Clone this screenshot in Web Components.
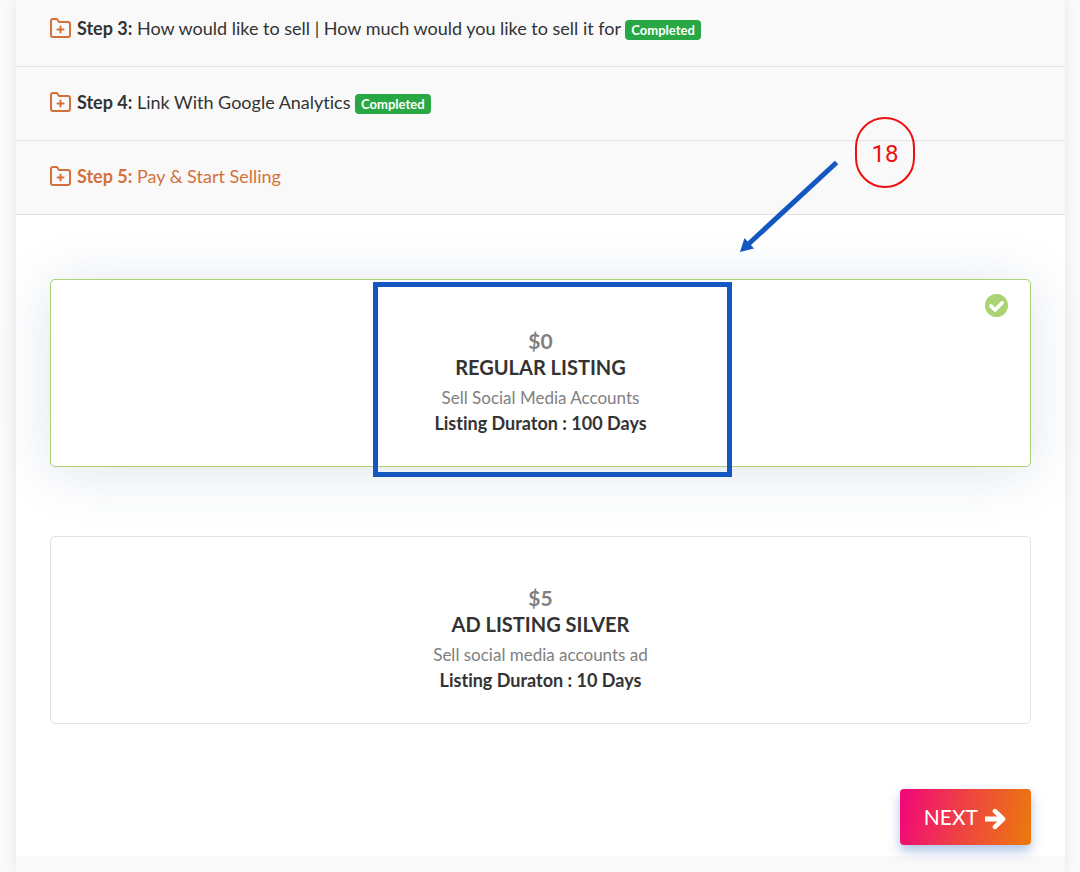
<!DOCTYPE html>
<html lang="en">
<head>
<meta charset="utf-8">
<title>Sell your account</title>
<meta name="viewport" content="width=device-width, initial-scale=1">
<style>
  body {
    margin: 0;
    min-height: 100vh;
    background: #fbfbfb;
    color: #333;
    font-family: Lato, "Open Sans", sans-serif;
    font-variant-ligatures: none;
    overflow-x: hidden;
  }
</style>
</head>
<body>
<listing-page>
  <step-header step="3" completed>How would like to sell | How much would you like to sell it for</step-header>
  <step-header step="4" completed>Link With Google Analytics</step-header>
  <step-header step="5" active>Pay &amp; Start Selling</step-header>
  <plan-card slot="plan" price="$0" duration="100 Days" checked>
    REGULAR LISTING
    <span slot="description">Sell Social Media Accounts</span>
  </plan-card>
  <plan-card slot="plan" price="$5" duration="10 Days">
    AD LISTING SILVER
    <span slot="description">Sell social media accounts ad</span>
  </plan-card>
  <next-button slot="action">NEXT</next-button>
  <guide-marks slot="guide">18</guide-marks>
</listing-page>

<script>
class ListingPage extends HTMLElement {
  css = `
  <style>
  :host {
    display: block;
    position: relative;
    padding: 0 15px 0 16px;
  }
  main {
    display: flow-root;
    min-height: 100vh;
    background: #f9f9f9;
    box-shadow: 0 0 14px rgba(0, 0, 0, 0.09);
  }
  .steps {
    margin-top: -7px;
  }
  .content {
    display: flex;
    flex-direction: column;
    background: #fff;
    padding: 64px 34px 11px;
  }
  .plans {
    display: grid;
    gap: 69px;
    margin-bottom: 65px;
  }
  .actions {
    display: flex;
    justify-content: flex-end;
  }
  </style>
  `.trim();

  constructor() {
    super();
    this.attachShadow({ mode: 'open' });
  }

  connectedCallback() {
    this.shadowRoot.innerHTML = `${this.css}
    <main>
      <div class="steps"><slot></slot></div>
      <section class="content">
        <div class="plans" role="radiogroup" aria-label="Listing plan"><slot name="plan"></slot></div>
        <div class="actions"><slot name="action"></slot></div>
      </section>
    </main>
    <slot name="guide"></slot>`;

    this.addEventListener('plan-selected', (e) => {
      this.querySelectorAll('plan-card').forEach((card) => {
        card.toggleAttribute('checked', card === e.target);
      });
    });
  }
}

class StepHeader extends HTMLElement {
  css = `
  <style>
  :host {
    display: block;
    border-bottom: 1px solid #e2e2e2;
  }
  button {
    display: flex;
    align-items: center;
    gap: 6px;
    width: 100%;
    padding: 23px 34px 25px;
    border: none;
    background: none;
    color: #333;
    font: inherit;
    font-variant-ligatures: none;
    font-size: 18px;
    line-height: 25px;
    text-align: left;
    cursor: pointer;
  }
  :host([active]) button {
    color: #d4713b;
  }
  svg {
    width: 21px;
    height: 21px;
    flex: none;
  }
  .badge {
    display: inline-block;
    padding: 3px 6px;
    border-radius: 4px;
    background: #28a745;
    color: #fff;
    font-size: 13px;
    font-weight: 700;
    line-height: 14px;
    vertical-align: middle;
  }
  </style>
  `.trim();

  constructor() {
    super();
    this.attachShadow({ mode: 'open' });
  }

  connectedCallback() {
    const badge = this.hasAttribute('completed') ? ' <span class="badge">Completed</span>' : '';
    this.shadowRoot.innerHTML = `${this.css}
    <button type="button">
      <svg viewBox="0 0 21 21" fill="none" stroke="#d4713b" stroke-width="2" stroke-linejoin="round" stroke-linecap="round" aria-hidden="true">
        <path d="M1 3a2 2 0 0 1 2-2h4l2 3h9a2 2 0 0 1 2 2v11a2 2 0 0 1-2 2H3a2 2 0 0 1-2-2z"/>
        <path d="M10.500 8.500v6M7.500 11.500h6"/>
      </svg>
      <span><strong>Step ${this.getAttribute('step')}:</strong> <slot></slot>${badge}</span>
    </button>`;
  }
}

class PlanCard extends HTMLElement {
  css = `
  <style>
  :host {
    display: block;
    position: relative;
  }
  label {
    display: flex;
    flex-direction: column;
    align-items: center;
    padding: 48px 20px 30px;
    border: 1px solid #dde5e5;
    border-radius: 5px;
    background: #fff;
    text-align: center;
    cursor: pointer;
  }
  :host([checked]) label {
    border-color: #abd373;
    box-shadow: 0 5px 56px rgba(50, 90, 140, 0.16);
  }
  input {
    position: absolute;
    opacity: 0;
  }
  .price {
    color: #808080;
    font-size: 21px;
    font-weight: 700;
    line-height: 26px;
  }
  .name {
    font-size: 20px;
    font-weight: 700;
    line-height: 26px;
  }
  .description {
    margin-top: 5px;
    color: #808080;
    font-size: 17px;
    line-height: 25px;
  }
  .duration {
    font-size: 18px;
    font-weight: 700;
    line-height: 26px;
  }
  svg {
    display: none;
    position: absolute;
    top: 15px;
    right: 23px;
    width: 23px;
    height: 23px;
  }
  :host([checked]) svg {
    display: block;
  }
  </style>
  `.trim();

  constructor() {
    super();
    this.attachShadow({ mode: 'open' });
  }

  static get observedAttributes() {
    return ['checked'];
  }

  connectedCallback() {
    this.shadowRoot.innerHTML = `${this.css}
    <label>
      <input type="radio" name="plan">
      <span class="price">${this.getAttribute('price')}</span>
      <span class="name"><slot></slot></span>
      <span class="description"><slot name="description"></slot></span>
      <span class="duration">Listing Duraton : ${this.getAttribute('duration')}</span>
    </label>
    <svg viewBox="0 0 23 23" aria-hidden="true">
      <circle cx="11.500" cy="11.500" r="11.500" fill="#abd373"/>
      <path d="M5.800 11.800l4.200 4.200 7.200-7.200" fill="none" stroke="#fff" stroke-width="3.600" stroke-linecap="round" stroke-linejoin="round"/>
    </svg>`;

    this._input = this.shadowRoot.querySelector('input');
    this._input.checked = this.hasAttribute('checked');
    this._input.addEventListener('change', () => {
      this.dispatchEvent(new CustomEvent('plan-selected', { bubbles: true }));
    });
  }

  attributeChangedCallback() {
    if (this._input) this._input.checked = this.hasAttribute('checked');
  }
}

class NextButton extends HTMLElement {
  css = `
  <style>
  :host {
    display: block;
  }
  button {
    display: flex;
    align-items: center;
    gap: 7px;
    padding: 14px 25px 14px 24px;
    border: none;
    border-radius: 4px;
    background: linear-gradient(100deg, #f1067a, #ee4540 50%, #ec7a0b);
    box-shadow: 0 6px 12px rgba(30, 80, 180, 0.35);
    color: #fff;
    font: inherit;
    font-size: 21px;
    line-height: 28px;
    cursor: pointer;
  }
  svg {
    width: 21px;
    height: 22px;
    margin-top: 4px;
  }
  </style>
  `.trim();

  constructor() {
    super();
    this.attachShadow({ mode: 'open' });
  }

  connectedCallback() {
    this.shadowRoot.innerHTML = `${this.css}
    <button type="button">
      <slot></slot>
      <svg viewBox="0 0 21 22" fill="none" stroke="#fff" stroke-linejoin="round" aria-hidden="true">
        <path d="M0 11h16" stroke-width="5"/>
        <path d="M10 3.200l8 7.800-8 7.800" stroke-width="4.600" stroke-linecap="round"/>
      </svg>
    </button>`;
  }
}

// Tutorial marks that float over the form
class GuideMarks extends HTMLElement {
  css = `
  <style>
  :host {
    position: absolute;
    inset: 0;
    pointer-events: none;
  }
  .frame, .number, svg {
    position: absolute;
    box-sizing: border-box;
  }
  .frame {
    left: 373px;
    top: 282px;
    width: 359px;
    height: 195px;
    border: 5px solid #1557c0;
  }
  .number {
    left: 855px;
    top: 117px;
    width: 60px;
    height: 71px;
    border: 2px solid #ec1010;
    border-radius: 30px;
    color: #ec1010;
    font: 24px/71px Roboto, sans-serif;
    text-align: center;
  }
  svg {
    left: 740px;
    top: 160px;
    width: 98px;
    height: 92px;
  }
  </style>
  `.trim();

  constructor() {
    super();
    this.attachShadow({ mode: 'open' });
  }

  connectedCallback() {
    this.shadowRoot.innerHTML = `${this.css}
    <div class="frame"></div>
    <svg viewBox="0 0 98 92" aria-hidden="true">
      <path d="M96.500 2.500L8 84.500" stroke="#1557c0" stroke-width="5"/>
      <path d="M0 92L4.500 78l9.500 10.500z" fill="#1557c0"/>
    </svg>
    <div class="number"><slot></slot></div>`;
  }
}

window.customElements.define('listing-page', ListingPage);
window.customElements.define('step-header', StepHeader);
window.customElements.define('plan-card', PlanCard);
window.customElements.define('next-button', NextButton);
window.customElements.define('guide-marks', GuideMarks);
</script>
</body>
</html>
